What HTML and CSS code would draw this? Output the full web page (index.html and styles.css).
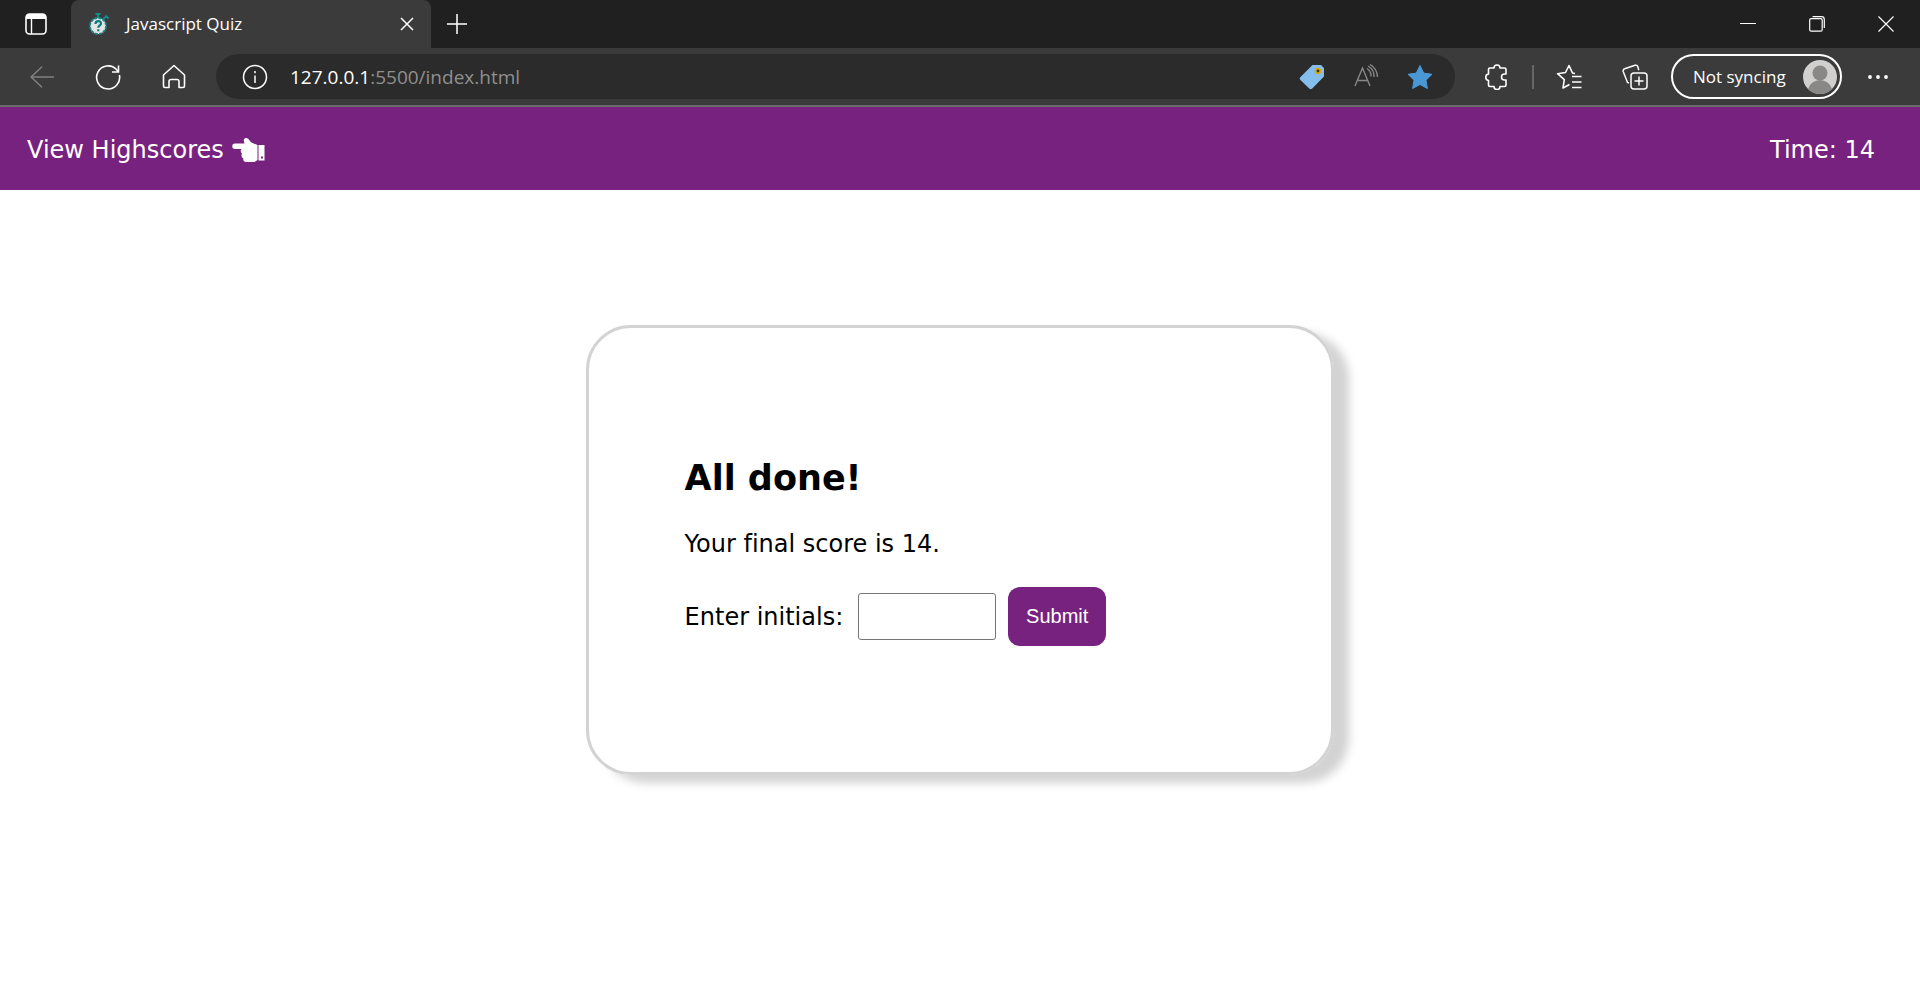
FILE: index.html
```html
<!DOCTYPE html>
<html lang="en">
<head>
<meta charset="utf-8">
<title>Javascript Quiz</title>
<link rel="stylesheet" href="styles.css">
</head>
<body>
<div class="browser">
  <div class="tab-strip">
    <button class="strip-button tabs-menu" aria-label="Tab actions">
      <svg width="22" height="22" viewBox="0 0 22 22"><rect x="1" y="1" width="20" height="20" rx="3.5" fill="none" stroke="#fff" stroke-width="1.6"/><path d="M1 6V4a3 3 0 0 1 3-3h14a3 3 0 0 1 3 3v2z" fill="#fff"/><path d="M6.5 6v15" stroke="#fff" stroke-width="1.4"/></svg>
    </button>
    <div class="tab">
      <svg width="22" height="22" viewBox="0 0 22 22"><path d="M7.500 1h5M10 1v4M15 6l4-3M17.500 2.500l3 3" stroke="#178a8a" stroke-width="2" fill="none"/><circle cx="10" cy="13" r="8" fill="#e4e4e4" stroke="#178a8a" stroke-width="1.800" stroke-dasharray="3 1.200"/><path d="M7.500 11c0-4 5.500-3.600 5.500-.6 0 2-2.700 2-2.700 4.300M10.300 16.200v2" fill="none" stroke="#08797c" stroke-width="2.200"/></svg>
      <span class="tab-title">Javascript Quiz</span>
      <button class="tab-close" aria-label="Close tab"><svg width="14" height="14" viewBox="0 0 14 14"><path d="M1 1l12 12M13 1L1 13" stroke="#fff" stroke-width="1.500"/></svg></button>
    </div>
    <button class="strip-button new-tab" aria-label="New tab"><svg width="22" height="22" viewBox="0 0 22 22"><path d="M11 1v20M1 11h20" stroke="#fff" stroke-width="1.500"/></svg></button>
    <div class="window-controls">
      <button class="strip-button" aria-label="Minimize"><svg width="16" height="16" viewBox="0 0 16 16"><path d="M0 7.500h16" stroke="#fff"/></svg></button>
      <button class="strip-button" aria-label="Restore"><svg width="16" height="16" viewBox="0 0 16 16"><rect x=".7" y="2.700" width="12.500" height="12.500" rx="1.500" fill="none" stroke="#fff" stroke-width="1.200"/><path d="M3.500.7h9a2.800 2.800 0 0 1 2.800 2.800v8.500" fill="none" stroke="#fff" stroke-width="1.200"/></svg></button>
      <button class="strip-button" aria-label="Close"><svg width="16" height="16" viewBox="0 0 16 16"><path d="M.5.5l15 15M15.500.5l-15 15" stroke="#fff" stroke-width="1.200"/></svg></button>
    </div>
  </div>
  <div class="toolbar">
    <button class="tool" aria-label="Back"><svg width="24" height="22" viewBox="0 0 24 22"><path d="M12 .8L1 11l11 10.200M1 11h23" fill="none" stroke="#818181" stroke-width="1.500"/></svg></button>
    <button class="tool" aria-label="Refresh"><svg width="26" height="26" viewBox="0 0 26 26"><path d="M24.400 11A11.500 11.500 0 1 1 21.500 5.500L23.500 8M23.500 1.500V8H17" fill="none" stroke="#fff" stroke-width="1.600"/></svg></button>
    <button class="tool" aria-label="Home"><svg width="24" height="26" viewBox="0 0 24 26"><path d="M1.500 11L12 1.500l10.500 9.500V22a1.500 1.500 0 0 1-1.500 1.500h-4V17.500a2 2 0 0 0-2-2h-6a2 2 0 0 0-2 2v6H3A1.500 1.500 0 0 1 1.500 22z" fill="none" stroke="#fff" stroke-width="1.600" stroke-linejoin="round"/></svg></button>
    <div class="address-bar">
      <button class="address-tool" aria-label="Site information"><svg width="26" height="26" viewBox="0 0 26 26"><circle cx="13" cy="13" r="11.500" fill="none" stroke="#fff" stroke-width="1.500"/><path d="M13 11.500v7.500M13 7v2.200" stroke="#fff" stroke-width="1.500"/></svg></button>
      <div class="url"><span class="url-host">127.0.0.1</span>:5500/index.html</div>
      <button class="address-tool" aria-label="Shopping"><svg width="26" height="26" viewBox="0 0 26 26"><path d="M13.500 1H22l3 3v8.500L13.500 24.200a2.500 2.500 0 0 1-3.500 0L1.500 16a2 2 0 0 1 0-3z" fill="#85bdec"/><circle cx="19" cy="7" r="2.300" fill="#333" stroke="#dca60d" stroke-width="1.800"/></svg></button>
      <button class="address-tool" aria-label="Read aloud"><svg width="26" height="26" viewBox="0 0 26 26"><path d="M2 22L9.500 4 17 22M5 16.500h9M14 4.500a9 9 0 0 1 4 8M15 2a12 12 0 0 1 6 11M17 .5a15 15 0 0 1 7.500 12.500" fill="none" stroke="#888" stroke-width="1.400"/></svg></button>
      <button class="address-tool" aria-label="Favorite"><svg width="26" height="26" viewBox="0 0 26 26"><path d="M13 1.500l3.700 7.600 8.300 1.200-6 5.900 1.400 8.300-7.400-4-7.400 4L7 16.200l-6-5.900 8.300-1.200z" fill="#4a97d6" stroke="#4a97d6" stroke-linejoin="round"/></svg></button>
    </div>
    <button class="tool extensions" aria-label="Extensions"><svg width="26" height="26" viewBox="0 0 26 26"><path d="M4.500 5.500A1.500 1.500 0 0 1 6 4h4a3 3 0 0 1 6 0h4.500A1.500 1.500 0 0 1 22 5.500V10h-1.500a3 3 0 0 0 0 6H22v5a1.500 1.500 0 0 1-1.500 1.500H16a3 3 0 0 1-6 0H6A1.500 1.500 0 0 1 4.500 21v-4.500a3.300 3.300 0 0 1 0-6.500z" fill="none" stroke="#fff" stroke-width="1.600" stroke-linejoin="round"/></svg></button>
    <div class="divider"></div>
    <button class="tool" aria-label="Favorites"><svg width="26" height="26" viewBox="0 0 26 26"><path d="M13.500 20.500l-6.500 3.500 1.300-8.300-6.800-6 8-1.200L13 1.500l3.500 7.500M16 12.500h9.500M16 18h9.500M16 23.500h9.500M16 9l3 .5" fill="none" stroke="#fff" stroke-width="1.600" stroke-linejoin="round"/></svg></button>
    <button class="tool" aria-label="Collections"><svg width="26" height="26" viewBox="0 0 26 26"><rect x="9" y="9" width="16" height="16" rx="3" fill="none" stroke="#fff" stroke-width="1.500"/><path d="M17 12.500v9M12.500 17h9M7 19l-1.500-.5L1.200 7.500a2.200 2.200 0 0 1 1.500-2.800L13 1.300a2.200 2.200 0 0 1 2.800 1.500l1 3.500" fill="none" stroke="#fff" stroke-width="1.500"/></svg></button>
    <button class="profile">Not syncing
      <svg width="34" height="34" viewBox="0 0 34 34"><circle cx="17" cy="17" r="17" fill="#d2d0ce"/><circle cx="17" cy="13" r="7.500" fill="#8a8886"/><path d="M5 29a12.500 12.500 0 0 1 24 0 17 17 0 0 1-24 0z" fill="#8a8886"/></svg>
    </button>
    <button class="tool" aria-label="More"><svg width="22" height="6" viewBox="0 0 22 6"><g fill="#fff"><circle cx="3" cy="3" r="1.900"/><circle cx="11" cy="3" r="1.900"/><circle cx="19" cy="3" r="1.900"/></g></svg></button>
  </div>
</div>
<header class="quiz-header">
  <a class="highscores" href="#">View Highscores
    <svg width="33" height="26" viewBox="0 0 33 26"><path d="M3 6.500h9.500C11 3 12 .8 14.500 1c2 .2 2.500 2.500 5 4.500L25.500 8v15l-3 2H14.500c-3 0-3.500-2-3-3.500-2-1-2.500-3-1.500-5-1.500-1-1.700-3-.5-4.500H3a2.700 2.700 0 0 1 0-5.500z" fill="#fff"/><path d="M26.500 8h6v15.500h-6zm2.500 11.500v2h2v-2z" fill="#fff" fill-rule="evenodd"/></svg>
  </a>
  <div>Time: 14</div>
</header>
<main class="quiz-card">
  <h1 class="card-title">All done!</h1>
  <p class="score">Your final score is 14.</p>
  <form class="initials-form">
    <label for="initials">Enter initials:</label>
    <input class="initials" id="initials" type="text">
    <button class="submit" type="button">Submit</button>
  </form>
</main>
</body>
</html>
```
FILE: styles.css
```css
* {
  box-sizing: border-box;
}

body {
  min-height: 100vh;
  margin: 0;
  background: #fff;
  color: #000;
  font: 24px/30px Verdana, "DejaVu Sans", sans-serif;
  font-variant-ligatures: none;
}

button {
  padding: 0;
  border: 0;
  background: none;
  color: #fff;
  font: inherit;
}

svg {
  display: block;
  flex: none;
}

/* Browser window */
.browser {
  color: #fff;
  font: 17px/24px "Segoe UI", "Open Sans", sans-serif;
}

.tab-strip {
  display: flex;
  height: 48px;
  background: #202020;
}

.strip-button {
  display: flex;
  align-items: center;
  justify-content: center;
  width: 69px;
}

.tabs-menu {
  width: 71px;
}

.tab {
  display: flex;
  align-items: center;
  width: 360px;
  padding: 0 16px 0 17px;
  border-radius: 8px 8px 0 0;
  background: #3b3b3b;
}

.tab-title {
  flex: 1;
  margin-left: 16px;
}

.tab-close {
  padding: 1px;
}

.new-tab {
  width: 52px;
}

.window-controls {
  display: flex;
  margin-left: auto;
}

.toolbar {
  display: flex;
  align-items: center;
  padding: 6px 9px;
  border-bottom: 2px solid #6b6b6b;
  background: #3b3b3b;
}

.tool {
  display: flex;
  align-items: center;
  justify-content: center;
  width: 66px;
  height: 45px;
}

.address-bar {
  display: flex;
  flex: 1;
  align-items: center;
  height: 45px;
  margin: 0 9px;
  padding: 0 8px 0 12px;
  border-radius: 23px;
  background: #2b2b2b;
}

.address-tool {
  display: flex;
  align-items: center;
  justify-content: center;
  width: 54px;
  height: 45px;
}

.url {
  flex: 1;
  margin-left: 8px;
  color: #8f8f8f;
  font-size: 19px;
}

.url-host {
  color: #fff;
}

.divider {
  width: 2px;
  height: 24px;
  margin: 0 2px;
  background: #666;
}

.profile {
  display: flex;
  align-items: center;
  justify-content: space-between;
  width: 171px;
  height: 45px;
  margin: 0 3px;
  padding: 0 3px 0 20px;
  border: 2px solid #fff;
  border-radius: 23px;
}

/* Quiz page */
.quiz-header {
  display: flex;
  align-items: center;
  justify-content: space-between;
  padding: 28px 45px 25px 27px;
  background: #782280;
  color: #fff;
}

.highscores {
  display: flex;
  align-items: center;
  gap: 8px;
  color: inherit;
  text-decoration: none;
}

.quiz-card {
  width: 39%;
  min-width: 640px;
  margin: 135px auto 0;
  padding: 128px 96px 126px;
  border: 3px solid lightgray;
  border-radius: 45px;
  box-shadow: 15px 8px 10px lightgray;
}

.card-title {
  margin: 0 0 29px;
  font-size: 35px;
  line-height: 44px;
}

.score {
  margin: 0 0 28px;
}

.initials-form {
  display: flex;
  align-items: center;
}

.initials {
  width: 138px;
  height: 47px;
  margin: 0 12px 0 15px;
  border: 1px solid #767676;
  border-radius: 3px;
  background: #fff;
  font: 20px Arial, "Liberation Sans", sans-serif;
}

.submit {
  width: 98px;
  height: 59px;
  border-radius: 12px;
  background: #782280;
  font: 20px Arial, "Liberation Sans", sans-serif;
}
```
